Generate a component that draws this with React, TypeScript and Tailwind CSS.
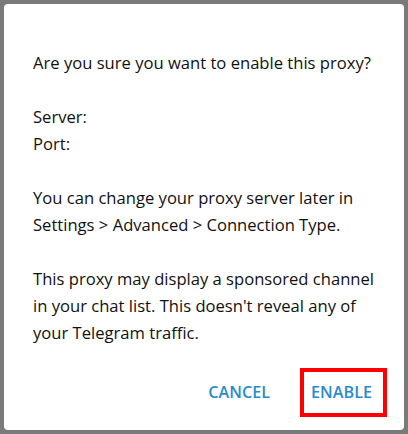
export default function App() {
  return (
    <div className="w-[408px] h-[434px] bg-[#7a7a7a] p-[4px]" style={{ fontFamily: '"Open Sans", sans-serif' }}>
      <div className="w-full h-full bg-white rounded-[4px] flex flex-col">
        <div className="pl-[29px] pr-[26px] pt-[45px] text-[16.6px] leading-[27px] text-[#111111]">
          <p>Are you sure you want to enable this proxy?</p>
          <p className="mt-[27px]">Server:</p>
          <p>Port:</p>
          <p className="mt-[27px]">You can change your proxy server later in Settings &gt; Advanced &gt; Connection Type.</p>
          <p className="mt-[27px]">This proxy may display a sponsored channel in your chat list. This doesn't reveal any of your Telegram traffic.</p>
        </div>
        <div className="flex justify-end items-center pr-[17px] mt-[22px]">
          <div className="text-[16.2px] font-semibold text-[#2a8bcb]">CANCEL</div>
          <div className="ml-[30px] border-[4px] border-[#ff0000] pl-[7px] pr-[11px] py-[10px] text-[16.2px] font-semibold text-[#2a8bcb] leading-[21px]">ENABLE</div>
        </div>
      </div>
    </div>
  );
}
